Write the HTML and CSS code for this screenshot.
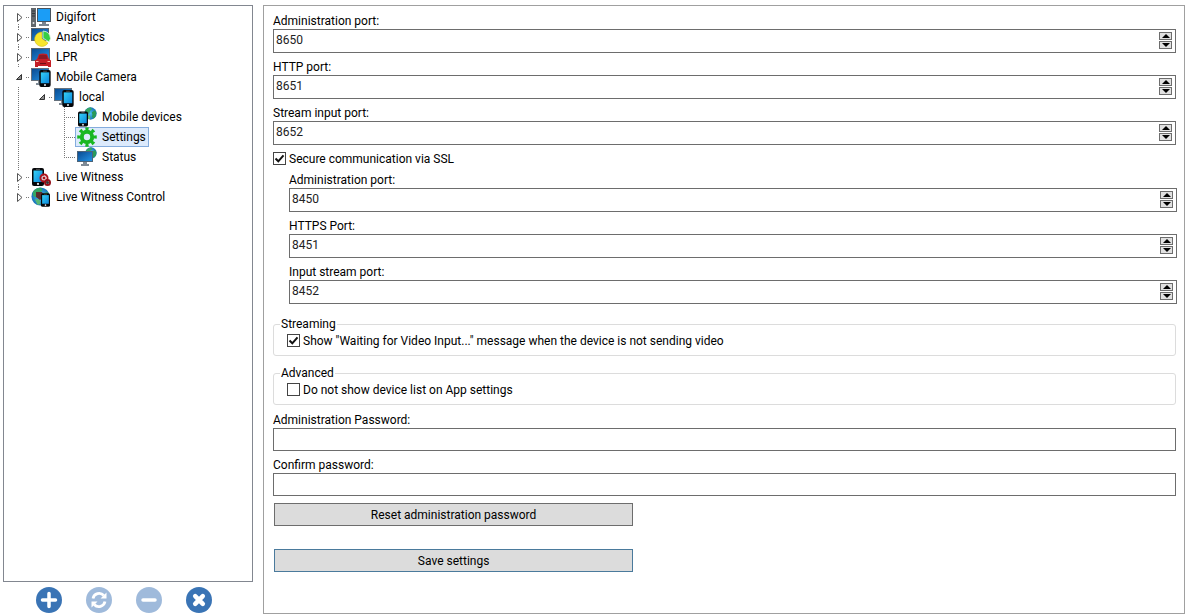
FILE: index.html
```
<!DOCTYPE html>
<html lang="en">
<head>
  <meta charset="UTF-8">
  <title>Mobile Camera - Settings</title>
  <link rel="stylesheet" href="styles.css">
</head>
<body>
  <!-- shared icons -->
  <svg class="sprite" aria-hidden="true">
    <defs>
      <linearGradient id="gScreen" x1="0" y1="0" x2="1" y2="1">
        <stop offset="0" stop-color="#0b4c92"/>
        <stop offset="1" stop-color="#2292e4"/>
      </linearGradient>
      <linearGradient id="gPhone" x1="0" y1="0" x2="1" y2="1">
        <stop offset="0" stop-color="#35d0f5"/>
        <stop offset="1" stop-color="#0a86dc"/>
      </linearGradient>
      <radialGradient id="gGlobe">
        <stop offset="0" stop-color="#4fc0f0"/>
        <stop offset="1" stop-color="#1672b8"/>
      </radialGradient>
    </defs>
    <symbol id="closed-first" viewBox="0 0 21 20">
      <path d="M10.500 17V20" class="dots"/>
      <path d="M18 10.500H21" class="dots"/>
      <path d="M9.500 6.500V14.500L14 10.500Z" fill="#fff" stroke="#555"/>
    </symbol>
    <symbol id="closed" viewBox="0 0 21 20">
      <path d="M10.500 0V3M10.500 17V20" class="dots"/>
      <path d="M18 10.500H21" class="dots"/>
      <path d="M9.500 6.500V14.500L14 10.500Z" fill="#fff" stroke="#555"/>
    </symbol>
    <symbol id="closed-last" viewBox="0 0 21 20">
      <path d="M10.500 0V3" class="dots"/>
      <path d="M18 10.500H21" class="dots"/>
      <path d="M9.500 6.500V14.500L14 10.500Z" fill="#fff" stroke="#555"/>
    </symbol>
    <symbol id="opened" viewBox="0 0 21 20">
      <path d="M18 10.500H21" class="dots"/>
      <path d="M13.500 7.500V12.500H8.500Z" fill="#909090" stroke="#333"/>
    </symbol>
    <symbol id="line" viewBox="0 0 21 20">
      <path d="M10.500 0V20" class="dots"/>
      <path d="M10 10.500H21" class="dots"/>
    </symbol>
    <symbol id="line-last" viewBox="0 0 21 20">
      <path d="M10.500 0V11" class="dots"/>
      <path d="M10 10.500H21" class="dots"/>
    </symbol>
    <symbol id="monitor" viewBox="0 0 20 20">
      <path d="M0 0H18V13H0Z" fill="#66717c"/>
      <path d="M1 1H17V12H1Z" fill="url(#gScreen)"/>
      <path d="M7 13H11V15H13V17H5V15H7Z" fill="#7f8b96"/>
    </symbol>
    <symbol id="phone" viewBox="0 0 12 18">
      <rect width="12" height="18" rx="2" fill="#05070a"/>
      <path d="M1.500 2.500H10.500V14H1.500Z" fill="url(#gPhone)"/>
      <path d="M4 1.300H8" stroke="#777" stroke-width=".7"/>
      <circle cx="6" cy="15.900" r="1.100" fill="#dfe7ee"/>
    </symbol>
    <symbol id="globe" viewBox="0 0 20 20">
      <circle cx="10" cy="10" r="9.500" fill="url(#gGlobe)"/>
      <path d="M2 5Q6 0 11 1L12 4 9 6 8 10 5 11 2 9Z" fill="#35a764"/>
      <path d="M12 8L17 5 19 9 18 14 15 18 12 15 13 12Z" fill="#2b9a59"/>
      <path d="M4 13L9 13 10 18 7 19Z" fill="#58b873"/>
    </symbol>
    <symbol id="i-server" viewBox="0 0 20 20">
      <path d="M0 1H5V20H0Z" fill="#62676c"/>
      <path d="M1 4H4M1 6.500H4M1 9H4" stroke="#34383c"/>
      <circle cx="2.500" cy="16" r="1" fill="#e4e8eb"/>
      <path d="M6 1H20V15H6Z" fill="#48545f"/>
      <path d="M7 2H19V14H7Z" fill="#1b9df6"/>
      <path d="M11 15H15V17H18V19H8V17H11Z" fill="#7a858f"/>
    </symbol>
    <symbol id="i-analytics" viewBox="0 0 20 20">
      <path d="M0 1H18V14H0Z" fill="#59636d"/>
      <path d="M1 2H17V13H1Z" fill="url(#gScreen)"/>
      <path d="M11 11.500V5A7.200 7.200 0 1 0 17 16Z" fill="#f7e62c" stroke="#cfb91c" stroke-width=".6"/>
      <path d="M12 11V4Q19 4.500 19.500 11.500L18 15Z" fill="#35ce45" stroke="#dff5df" stroke-width=".8"/>
    </symbol>
    <symbol id="i-lpr" viewBox="0 0 20 20">
      <path d="M0 1H19V14H0Z" fill="#59636d"/>
      <path d="M1 2H18V13H1Z" fill="url(#gScreen)"/>
      <path d="M8 7Q12 6 16 7L18 12 20 13.500V20H17V19H7V20H4V13.500L6 12Z" fill="#c51f26"/>
      <path d="M8.500 8Q12 7.300 15.500 8L16.700 12H7.300Z" fill="#8c1a24"/>
      <path d="M5 14.500H7.500M16.500 14.500H19" stroke="#ffb8a8"/>
      <path d="M9 16.500H15" stroke="#6d0f16"/>
    </symbol>
    <symbol id="i-mobile" viewBox="0 0 20 20">
      <use href="#monitor" x="0" y="1" width="20" height="20"/>
      <use href="#phone" x="8" y="3" width="12" height="17"/>
    </symbol>
    <symbol id="i-devices" viewBox="0 0 20 20">
      <use href="#globe" x="7" y="0" width="13" height="13"/>
      <use href="#phone" x="1" y="4" width="10" height="16"/>
    </symbol>
    <symbol id="i-gear" viewBox="0 0 20 20">
      <g fill="none" stroke="#18b722">
        <circle cx="10" cy="10" r="8" stroke-width="3.600" pathLength="16" stroke-dasharray="1 1" stroke-dashoffset=".5"/>
        <circle cx="10" cy="10" r="5.200" stroke-width="4"/>
      </g>
    </symbol>
    <symbol id="i-status" viewBox="0 0 20 20">
      <use href="#globe" x="8" y="0" width="12" height="12"/>
      <path d="M0 4H16V15H0Z" fill="#4d6478"/>
      <path d="M1 5H15V14H1Z" fill="url(#gScreen)"/>
      <path d="M6 15H10V17H12V19H4V17H6Z" fill="#7f8b96"/>
    </symbol>
    <symbol id="i-witness" viewBox="0 0 20 20">
      <use href="#phone" x="1" y="1" width="12" height="18"/>
      <circle cx="13" cy="11" r="3.500" fill="none" stroke="#b0121b" stroke-width="2"/>
      <circle cx="13" cy="11" r="2.500" fill="#e9c4c6"/>
      <circle cx="13" cy="11" r="1.300" fill="#a5121a"/>
      <circle cx="16.500" cy="15.500" r="2.500" fill="none" stroke="#941019" stroke-width="2"/>
      <circle cx="16.500" cy="15.500" r="1.500" fill="#333"/>
    </symbol>
    <symbol id="i-witness-control" viewBox="0 0 20 20">
      <use href="#globe" x="0" y="0" width="19" height="19"/>
      <path d="M5 5L11 5 13 10 9 13 5 10Z" fill="#5b2d2c"/>
      <use href="#phone" x="10" y="6" width="9" height="14"/>
    </symbol>
  </svg>

  <div class="app">
    <div class="side">
      <nav class="tree" aria-label="Servers">
        <ul class="root">
          <li>
            <svg class="twig"><use href="#closed-first"/></svg>
            <a class="node" href="#"><svg class="icon"><use href="#i-server"/></svg>Digifort</a>
          </li>
          <li>
            <svg class="twig"><use href="#closed"/></svg>
            <a class="node" href="#"><svg class="icon"><use href="#i-analytics"/></svg>Analytics</a>
          </li>
          <li>
            <svg class="twig"><use href="#closed"/></svg>
            <a class="node" href="#"><svg class="icon"><use href="#i-lpr"/></svg>LPR</a>
          </li>
          <li>
            <svg class="twig"><use href="#opened"/></svg>
            <a class="node" href="#"><svg class="icon"><use href="#i-mobile"/></svg>Mobile Camera</a>
            <ul class="branch trunk">
              <li>
                <svg class="twig"><use href="#opened"/></svg>
                <a class="node" href="#"><svg class="icon"><use href="#i-mobile"/></svg>local</a>
                <ul class="branch">
                  <li>
                    <svg class="twig"><use href="#line"/></svg>
                    <a class="node" href="#"><svg class="icon"><use href="#i-devices"/></svg>Mobile devices</a>
                  </li>
                  <li>
                    <svg class="twig"><use href="#line"/></svg>
                    <a class="node selected" href="#"><svg class="icon"><use href="#i-gear"/></svg>Settings</a>
                  </li>
                  <li>
                    <svg class="twig"><use href="#line-last"/></svg>
                    <a class="node" href="#"><svg class="icon"><use href="#i-status"/></svg>Status</a>
                  </li>
                </ul>
              </li>
            </ul>
          </li>
          <li>
            <svg class="twig"><use href="#closed"/></svg>
            <a class="node" href="#"><svg class="icon"><use href="#i-witness"/></svg>Live Witness</a>
          </li>
          <li>
            <svg class="twig"><use href="#closed-last"/></svg>
            <a class="node" href="#"><svg class="icon"><use href="#i-witness-control"/></svg>Live Witness Control</a>
          </li>
        </ul>
      </nav>

      <div class="tools">
        <button type="button" class="round" aria-label="Add">
          <svg viewBox="0 0 26 26"><path d="M13 6.500V19.500M6.500 13H19.500" stroke-width="3.500" stroke-linecap="round"/></svg>
        </button>
        <button type="button" class="round" aria-label="Refresh" disabled>
          <svg viewBox="0 0 26 26">
            <path d="M7 11.500A6.300 6.300 0 0 1 17.800 8.500M19 14.500A6.300 6.300 0 0 1 8.200 17.500" stroke-width="2.800"/>
            <path d="M20.500 5.500V11.500H14.500ZM5.500 20.500V14.500H11.500Z" fill="#fff" stroke="none"/>
          </svg>
        </button>
        <button type="button" class="round" aria-label="Remove" disabled>
          <svg viewBox="0 0 26 26"><path d="M7 13H19" stroke-width="3.500" stroke-linecap="round"/></svg>
        </button>
        <button type="button" class="round" aria-label="Close">
          <svg viewBox="0 0 26 26"><path d="M9.200 9.200L16.800 16.800M16.800 9.200L9.200 16.800" stroke-width="4.500" stroke-linecap="round"/></svg>
        </button>
      </div>
    </div>

    <form class="panel" id="settingsForm">
      <label for="adminPort">Administration port:</label>
      <div class="spin">
        <input type="number" id="adminPort" value="8650">
        <div class="arrows">
          <button type="button" class="up" aria-label="Increase"></button>
          <button type="button" class="down" aria-label="Decrease"></button>
        </div>
      </div>

      <label for="httpPort">HTTP port:</label>
      <div class="spin">
        <input type="number" id="httpPort" value="8651">
        <div class="arrows">
          <button type="button" class="up" aria-label="Increase"></button>
          <button type="button" class="down" aria-label="Decrease"></button>
        </div>
      </div>

      <label for="streamPort">Stream input port:</label>
      <div class="spin">
        <input type="number" id="streamPort" value="8652">
        <div class="arrows">
          <button type="button" class="up" aria-label="Increase"></button>
          <button type="button" class="down" aria-label="Decrease"></button>
        </div>
      </div>

      <div class="check">
        <input type="checkbox" id="ssl" checked>
        <label for="ssl">Secure communication via SSL</label>
      </div>

      <div class="ssl-ports">
        <label for="sslAdminPort">Administration port:</label>
        <div class="spin">
          <input type="number" id="sslAdminPort" value="8450">
          <div class="arrows">
            <button type="button" class="up" aria-label="Increase"></button>
            <button type="button" class="down" aria-label="Decrease"></button>
          </div>
        </div>

        <label for="httpsPort">HTTPS Port:</label>
        <div class="spin">
          <input type="number" id="httpsPort" value="8451">
          <div class="arrows">
            <button type="button" class="up" aria-label="Increase"></button>
            <button type="button" class="down" aria-label="Decrease"></button>
          </div>
        </div>

        <label for="sslStreamPort">Input stream port:</label>
        <div class="spin">
          <input type="number" id="sslStreamPort" value="8452">
          <div class="arrows">
            <button type="button" class="up" aria-label="Increase"></button>
            <button type="button" class="down" aria-label="Decrease"></button>
          </div>
        </div>
      </div>

      <fieldset>
        <legend>Streaming</legend>
        <div class="check">
          <input type="checkbox" id="waiting" checked>
          <label for="waiting">Show "Waiting for Video Input..." message when the device is not sending video</label>
        </div>
      </fieldset>

      <fieldset>
        <legend>Advanced</legend>
        <div class="check">
          <input type="checkbox" id="hideList">
          <label for="hideList">Do not show device list on App settings</label>
        </div>
      </fieldset>

      <label for="password">Administration Password:</label>
      <input type="password" class="text" id="password">

      <label for="confirm">Confirm password:</label>
      <input type="password" class="text" id="confirm">

      <button type="button" class="btn">Reset administration password</button>
      <button type="submit" class="btn save">Save settings</button>
    </form>
  </div>

  <script>
    document.querySelectorAll('.spin').forEach(spin => {
      const input = spin.querySelector('input');
      spin.querySelector('.up').addEventListener('click', () => input.stepUp());
      spin.querySelector('.down').addEventListener('click', () => input.stepDown());
    });

    document.getElementById('settingsForm').addEventListener('submit', e => e.preventDefault());
  </script>
</body>
</html>
```
FILE: styles.css
```
* {
  box-sizing: border-box;
}
body {
  margin: 0;
  background: #fff;
  color: #000;
}
body, input, button {
  font-family: "Segoe UI", Roboto, sans-serif;
  font-size: 12px;
  line-height: 16px;
}
.sprite {
  position: absolute;
  width: 0;
  height: 0;
}
.app {
  display: flex;
  gap: 10px;
  min-height: 100vh;
  padding: 5px 1px 2px 3px;
}

/* left column */
.side {
  display: flex;
  flex-direction: column;
  flex: 0 0 250px;
}
.tree {
  flex: 1;
  padding: 1px 4px;
  border: 1px solid #828790;
}
.tree ul {
  margin: 0;
  padding: 0;
  list-style: none;
}
.tree li {
  display: flex;
  flex-wrap: wrap;
}
.tree .branch {
  flex: 0 0 100%;
  padding-left: 23px;
}
/* dotted line that runs past an open branch */
.tree .trunk {
  background: repeating-linear-gradient(#777 0 1px, transparent 1px 2px) 10px 0 / 1px 100% no-repeat;
}
.twig {
  width: 21px;
  height: 20px;
}
.dots {
  fill: none;
  stroke: #777;
  stroke-dasharray: 1 1;
}
.node {
  display: flex;
  align-items: center;
  gap: 5px;
  height: 20px;
  padding: 0 2px 0 1px;
  border: 1px solid transparent;
  color: #000;
  text-decoration: none;
}
.node.selected {
  background: #dceafc;
  border-color: #84acdd;
}
.icon {
  flex: none;
  width: 20px;
  height: 20px;
}

.tools {
  display: flex;
  gap: 24px;
  padding: 5px 33px 1px;
}
.round {
  width: 26px;
  height: 26px;
  padding: 0;
  border: none;
  border-radius: 50%;
  background: #3a74b5;
}
.round:disabled {
  background: #9fbadb;
}
.round svg {
  display: block;
  fill: none;
  stroke: #fff;
}

/* settings */
.panel {
  flex: 1;
  padding: 7px 8px 8px 9px;
  border: 1px solid #a0a0a0;
}
.panel > label, .ssl-ports > label {
  display: block;
}
.spin {
  display: flex;
  height: 24px;
  margin-bottom: 6px;
  padding: 2px 3px 3px 2px;
  border: 1px solid #6d6d6d;
}
.spin input {
  flex: 1;
  min-width: 0;
  height: 16px;
  padding: 0;
  border: none;
  outline: none;
  color: #222;
  appearance: textfield;
}
.spin input::-webkit-inner-spin-button {
  display: none;
}
.arrows {
  display: flex;
  flex-direction: column;
  gap: 1px;
}
.arrows button {
  display: flex;
  align-items: center;
  justify-content: center;
  width: 13px;
  flex: 1;
  padding: 0;
  border: 1px solid #6d6d6d;
  background: #e1e1e1;
}
.arrows button::before {
  content: "";
  border: 4px solid transparent;
  border-top-width: 0;
  border-bottom: 4px solid #000;
}
.arrows .down::before {
  border-top: 4px solid #000;
  border-bottom-width: 0;
}
.check {
  display: flex;
  align-items: center;
  gap: 3px;
  height: 15px;
}
.check input {
  appearance: none;
  width: 13px;
  height: 13px;
  margin: 0;
  border: 1px solid #444;
  background: #fff;
}
.check input:checked {
  background-image: url('data:image/svg+xml,<svg xmlns="http://www.w3.org/2000/svg" viewBox="0 0 11 11"><path d="M1.500 5.500L4.300 8.300L9.500 2.300" fill="none" stroke="%23111" stroke-width="2"/></svg>');
}
.ssl-ports {
  margin: 6px -1px 0 0;
  padding-left: 16px;
}
fieldset {
  margin: 0 0 9px;
  padding: 1px 13px 7px;
  border: 1px solid #dcdcdc;
  border-radius: 3px;
}
.ssl-ports + fieldset {
  margin-top: 12px;
}
legend {
  margin-left: -7px;
  padding: 0 1px;
}
fieldset + label {
  margin-top: -2px;
}
.text {
  display: block;
  width: 100%;
  height: 23px;
  margin-bottom: 6px;
  padding: 0 3px;
  border: 1px solid #6d6d6d;
}
.btn {
  display: block;
  width: calc(40% - 2px);
  height: 23px;
  margin: 7px 1px 23px;
  padding: 0;
  border: 1px solid #6d6d6d;
  background: #dcdcdc;
}
.save {
  margin-bottom: 0;
  border-color: #4a7a9c;
}
```
